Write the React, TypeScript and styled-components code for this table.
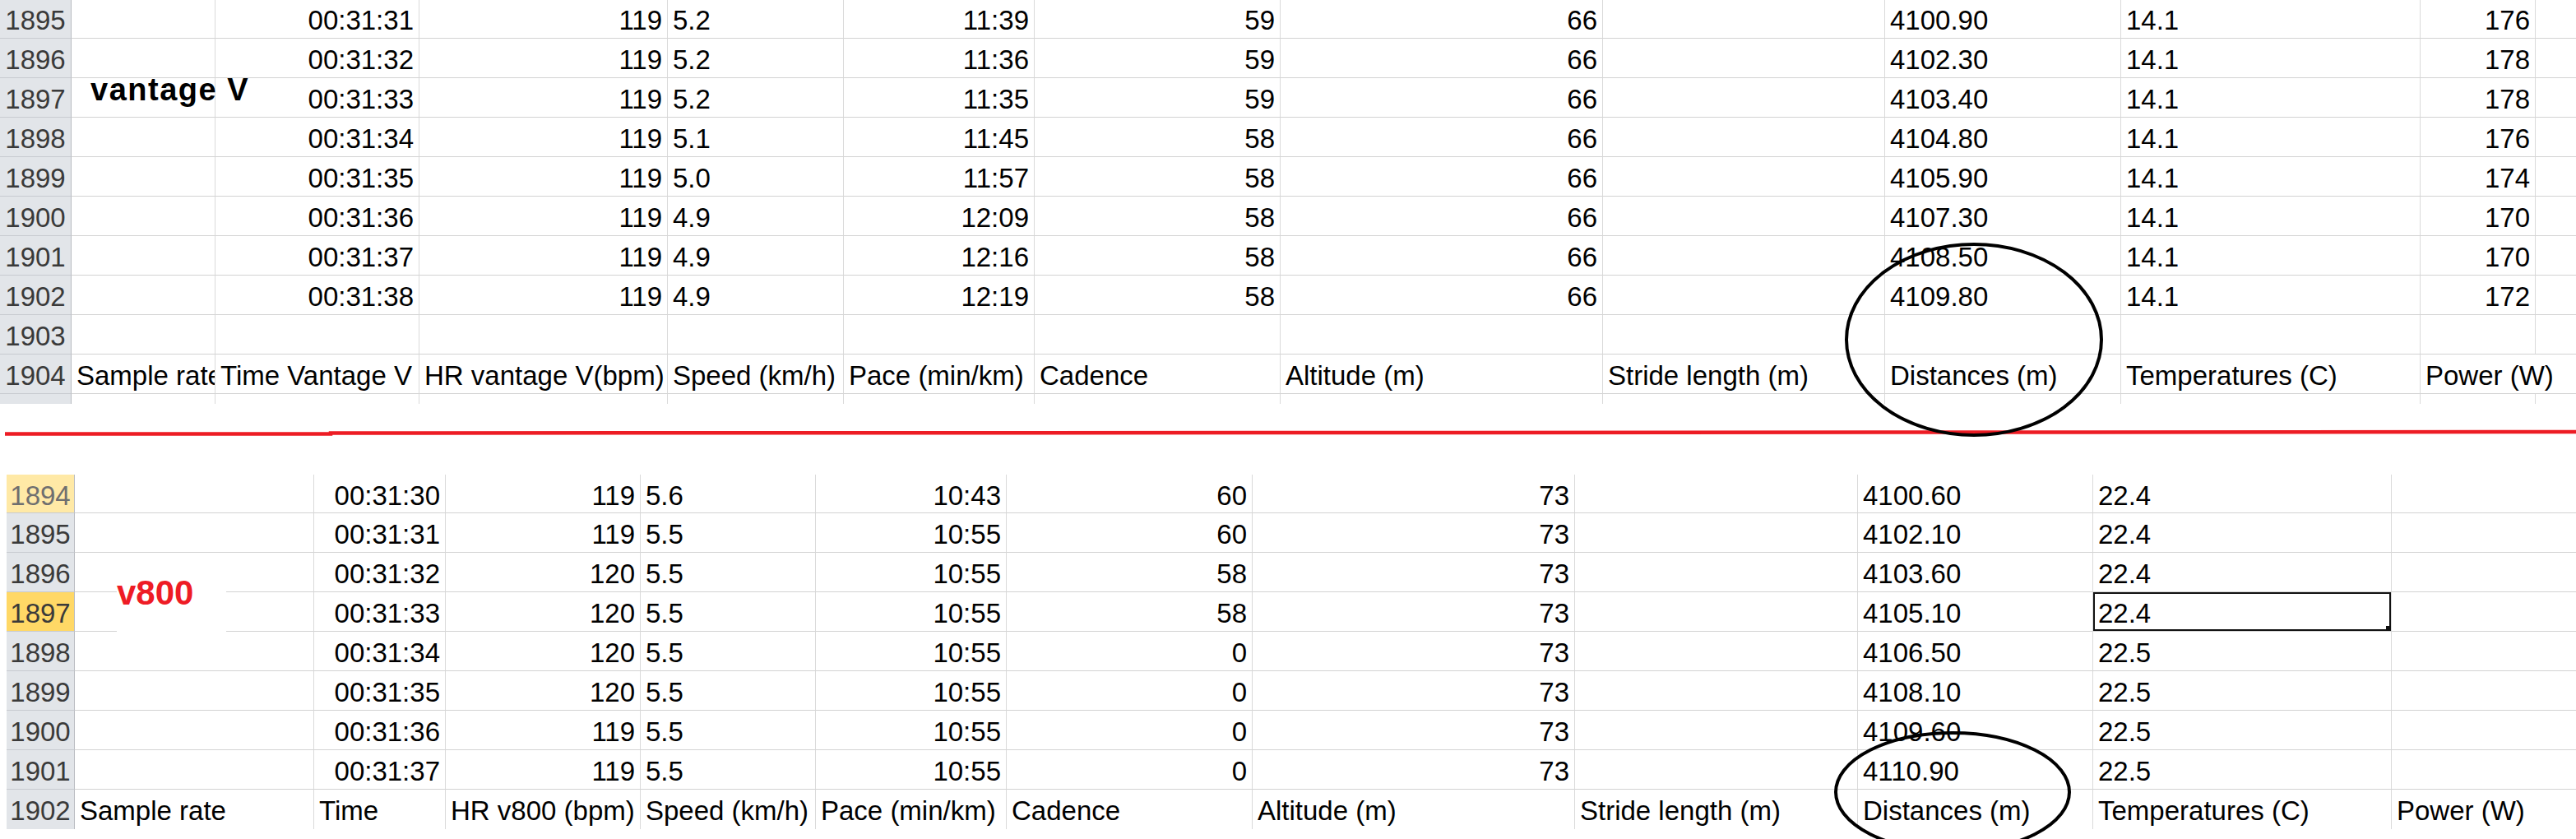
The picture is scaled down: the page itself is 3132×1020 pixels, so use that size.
import React from "react";
import styled, { createGlobalStyle } from "styled-components";

const GlobalStyle = createGlobalStyle`
  html, body {
    margin: 0;
    padding: 0;
    background: #ffffff;
  }
  body {
    font-family: "Liberation Sans", Arial, sans-serif;
  }
`;

type Align = "left" | "right";
type Tone = "normal" | "faded" | "active";

const Page = styled.div`
  position: relative;
  width: 3132px;
  height: 1020px;
  overflow: hidden;
  background: #ffffff;
  display: flex;
  flex-direction: column;
`;

const Sheet = styled.div<{ $cols: number[]; $rows: string; $left: number; $top: number }>`
  display: grid;
  flex: none;
  grid-template-columns: ${(p) => p.$cols.map((c) => `${c}px`).join(" ")};
  grid-template-rows: ${(p) => p.$rows};
  margin-left: ${(p) => p.$left}px;
  margin-top: ${(p) => p.$top}px;
`;

const Cell = styled.div<{
  $align: Align;
  $noRight?: boolean;
  $noBottom?: boolean;
  $selected?: boolean;
  $spill?: boolean;
}>`
  position: relative;
  z-index: ${(p) => (p.$spill ? 1 : "auto")};
  box-sizing: border-box;
  border-right: ${(p) => (p.$noRight ? "none" : "1px solid #dadada")};
  border-bottom: ${(p) => (p.$noBottom ? "none" : "1px solid #d3d3d3")};
  padding: 3px 6px 0 6px;
  font-size: 33px;
  line-height: 45px;
  color: #000000;
  text-align: ${(p) => p.$align};
  white-space: nowrap;
  overflow: ${(p) => (p.$spill ? "visible" : "hidden")};
  box-shadow: ${(p) => (p.$selected ? "inset 0 0 0 2px #111111" : "none")};

  &::after {
    content: "";
    display: ${(p) => (p.$selected ? "block" : "none")};
    position: absolute;
    right: 0;
    bottom: 0;
    width: 6px;
    height: 6px;
    background: #111111;
  }
`;

const RowHead = styled.div<{ $tone: Tone; $noBottom?: boolean }>`
  box-sizing: border-box;
  border-right: 1px solid #b9bcc1;
  border-bottom: ${(p) => (p.$noBottom ? "none" : "1px solid #c8cbd0")};
  background: ${(p) =>
    p.$tone === "active" ? "#ffd866" : p.$tone === "faded" ? "#ffe9a6" : "#e2e5e9"};
  color: ${(p) => (p.$tone === "faded" ? "#6f6f6f" : "#3a3a3a")};
  padding-top: 3px;
  font-size: 33px;
  line-height: 45px;
  text-align: center;
  white-space: nowrap;
  overflow: hidden;
`;

const Divider = styled.div`
  flex: none;
  height: 86px;
  width: 3132px;
`;

const DividerLine = styled.svg`
  display: block;
  width: 3132px;
  height: 86px;
`;

const Overlay = styled.svg`
  position: absolute;
  left: 0;
  top: 0;
  width: 3132px;
  height: 1020px;
  pointer-events: none;
`;

const VantageLabel = styled.div`
  position: absolute;
  left: 110px;
  top: 90px;
  font-size: 38px;
  line-height: 38px;
  font-weight: 700;
  letter-spacing: 1.5px;
  color: #000000;
  white-space: nowrap;
`;

const V800Label = styled.div`
  position: absolute;
  left: 142px;
  top: 690px;
  width: 133px;
  height: 78px;
  box-sizing: border-box;
  padding-top: 10px;
  background: #ffffff;
  font-size: 42px;
  line-height: 42px;
  font-weight: 700;
  color: #ee1c25;
  white-space: nowrap;
`;

/* ---------- data ---------- */

const topCols = [87, 175, 248, 302, 214, 232, 299, 392, 343, 287, 364, 140, 49];
// alignment of data cells A..L
const topAlign: Align[] = ["left", "right", "right", "left", "right", "right", "right", "left", "left", "left", "right", "left"];

const topData: [string, string[]][] = [
  ["1895", ["", "00:31:31", "119", "5.2", "11:39", "59", "66", "", "4100.90", "14.1", "176", ""]],
  ["1896", ["", "00:31:32", "119", "5.2", "11:36", "59", "66", "", "4102.30", "14.1", "178", ""]],
  ["1897", ["", "00:31:33", "119", "5.2", "11:35", "59", "66", "", "4103.40", "14.1", "178", ""]],
  ["1898", ["", "00:31:34", "119", "5.1", "11:45", "58", "66", "", "4104.80", "14.1", "176", ""]],
  ["1899", ["", "00:31:35", "119", "5.0", "11:57", "58", "66", "", "4105.90", "14.1", "174", ""]],
  ["1900", ["", "00:31:36", "119", "4.9", "12:09", "58", "66", "", "4107.30", "14.1", "170", ""]],
  ["1901", ["", "00:31:37", "119", "4.9", "12:16", "58", "66", "", "4108.50", "14.1", "170", ""]],
  ["1902", ["", "00:31:38", "119", "4.9", "12:19", "58", "66", "", "4109.80", "14.1", "172", ""]],
  ["1903", ["", "", "", "", "", "", "", "", "", "", "", ""]],
];

const topHeader = [
  "Sample rate",
  "Time Vantage V",
  "HR vantage V(bpm)",
  "Speed (km/h)",
  "Pace (min/km)",
  "Cadence",
  "Altitude (m)",
  "Stride length (m)",
  "Distances (m)",
  "Temperatures (C)",
  "Power (W)",
  "",
];

const bottomCols = [83, 291, 160, 237, 213, 232, 299, 392, 344, 286, 363, 224];
const bottomAlign: Align[] = ["left", "right", "right", "left", "right", "right", "right", "left", "left", "left", "left"];

const bottomData: [string, Tone, string[]][] = [
  ["1894", "faded", ["", "00:31:30", "119", "5.6", "10:43", "60", "73", "", "4100.60", "22.4", ""]],
  ["1895", "normal", ["", "00:31:31", "119", "5.5", "10:55", "60", "73", "", "4102.10", "22.4", ""]],
  ["1896", "normal", ["", "00:31:32", "120", "5.5", "10:55", "58", "73", "", "4103.60", "22.4", ""]],
  ["1897", "active", ["", "00:31:33", "120", "5.5", "10:55", "58", "73", "", "4105.10", "22.4", ""]],
  ["1898", "normal", ["", "00:31:34", "120", "5.5", "10:55", "0", "73", "", "4106.50", "22.5", ""]],
  ["1899", "normal", ["", "00:31:35", "120", "5.5", "10:55", "0", "73", "", "4108.10", "22.5", ""]],
  ["1900", "normal", ["", "00:31:36", "119", "5.5", "10:55", "0", "73", "", "4109.60", "22.5", ""]],
  ["1901", "normal", ["", "00:31:37", "119", "5.5", "10:55", "0", "73", "", "4110.90", "22.5", ""]],
];

const bottomHeader = [
  "Sample rate",
  "Time",
  "HR v800 (bpm)",
  "Speed (km/h)",
  "Pace (min/km)",
  "Cadence",
  "Altitude (m)",
  "Stride length (m)",
  "Distances (m)",
  "Temperatures (C)",
  "Power (W)",
];

/* ---------- sections ---------- */

function TopSheet() {
  const last = topAlign.length - 1;
  return (
    <Sheet $cols={topCols} $rows="repeat(10, 48px) 12px" $left={0} $top={-1}>
      {topData.map(([num, cells]) => (
        <React.Fragment key={num}>
          <RowHead $tone="normal">{num}</RowHead>
          {cells.map((v, i) => (
            <Cell key={i} $align={topAlign[i]} $noRight={i === last}>
              {v}
            </Cell>
          ))}
        </React.Fragment>
      ))}
      <RowHead $tone="normal">1904</RowHead>
      {topHeader.map((v, i) => {
        const spill = i === last - 1;
        return (
          <Cell key={`h${i}`} $align="left" $noRight={i === last || spill} $spill={spill}>
            {v}
          </Cell>
        );
      })}
      <RowHead $tone="normal" $noBottom />
      {topHeader.map((_, i) => (
        <Cell key={`p${i}`} $align="left" $noRight={i === last} $noBottom />
      ))}
    </Sheet>
  );
}

function BottomSheet() {
  const last = bottomAlign.length - 1;
  return (
    <Sheet $cols={bottomCols} $rows="47px repeat(8, 48px)" $left={8} $top={0}>
      {bottomData.map(([num, tone, cells]) => (
        <React.Fragment key={num}>
          <RowHead $tone={tone}>{num}</RowHead>
          {cells.map((v, i) => (
            <Cell
              key={i}
              $align={bottomAlign[i]}
              $noRight={i === last}
              $selected={num === "1897" && i === 9}
            >
              {v}
            </Cell>
          ))}
        </React.Fragment>
      ))}
      <RowHead $tone="normal" $noBottom>
        1902
      </RowHead>
      {bottomHeader.map((v, i) => (
        <Cell key={`h${i}`} $align="left" $noRight={i === last} $noBottom>
          {v}
        </Cell>
      ))}
    </Sheet>
  );
}

export default function App() {
  return (
    <>
      <GlobalStyle />
      <Page>
        <TopSheet />
        <Divider>
          <DividerLine viewBox="0 0 3132 86">
            <polyline
              points="6,36.5 402,36.5 402,35.5 1600,35 3132,34"
              fill="none"
              stroke="#ed1c24"
              strokeWidth="4.5"
            />
          </DividerLine>
        </Divider>
        <BottomSheet />

        <VantageLabel>vantage V</VantageLabel>
        <V800Label>v800</V800Label>

        <Overlay viewBox="0 0 3132 1020">
          <ellipse cx="2400" cy="413" rx="155" ry="116" fill="none" stroke="#000" strokeWidth="4" />
          <ellipse cx="2374" cy="963" rx="142" ry="72" fill="none" stroke="#000" strokeWidth="4" />
        </Overlay>
      </Page>
    </>
  );
}
